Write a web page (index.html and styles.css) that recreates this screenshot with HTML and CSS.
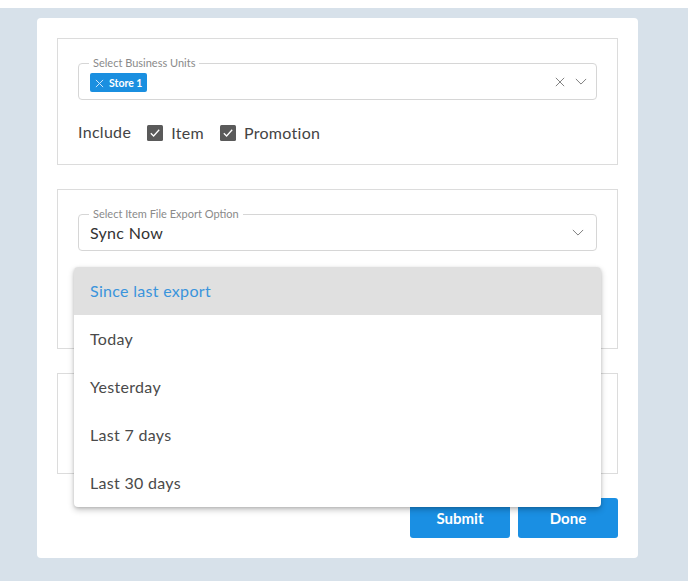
FILE: index.html
```html
<!DOCTYPE html>
<html>
<head>
<meta charset="utf-8">
<link rel="stylesheet" href="styles.css">
</head>
<body>
<div class="page">
  <div class="card">
    <div class="section s1">
      <div class="field">
        <span class="label">Select Business Units</span>
        <div class="field-body">
          <span class="chip">
            <svg class="chip-x" viewBox="0 0 10 10" width="9" height="9"><path d="M1 1L9 9M9 1L1 9" stroke="#cfe6fa" stroke-width="1.1" fill="none"/></svg>
            Store 1
          </span>
          <span class="spacer"></span>
          <svg class="icon" viewBox="0 0 12 12" width="10" height="10"><path d="M1 1L11 11M11 1L1 11" stroke="#777" stroke-width="1.1" fill="none"/></svg>
          <svg class="icon chev" viewBox="0 0 14 8" width="12" height="7"><path d="M1 1L7 7L13 1" stroke="#777" stroke-width="1.1" fill="none"/></svg>
        </div>
      </div>
      <div class="include">
        <span class="inc-label">Include</span>
        <span class="check"><svg viewBox="0 0 16 16" width="16" height="16"><rect width="16" height="16" rx="1.5" fill="#5a5a5a"/><path d="M3.8 8.3L6.6 11L12.2 4.8" stroke="#fff" stroke-width="1.3" fill="none"/></svg>Item</span>
        <span class="check"><svg viewBox="0 0 16 16" width="16" height="16"><rect width="16" height="16" rx="1.5" fill="#5a5a5a"/><path d="M3.8 8.3L6.6 11L12.2 4.8" stroke="#fff" stroke-width="1.3" fill="none"/></svg>Promotion</span>
      </div>
    </div>

    <div class="section s2">
      <div class="field">
        <span class="label">Select Item File Export Option</span>
        <div class="field-body">
          <span class="value">Sync Now</span>
          <span class="spacer"></span>
          <svg class="icon chev2" viewBox="0 0 14 8" width="12" height="7"><path d="M1 1L7 7L13 1" stroke="#777" stroke-width="1.1" fill="none"/></svg>
        </div>
        <ul class="menu">
          <li class="active">Since last export</li>
          <li>Today</li>
          <li>Yesterday</li>
          <li>Last 7 days</li>
          <li>Last 30 days</li>
        </ul>
      </div>
    </div>

    <div class="section s3"></div>

    <div class="actions">
      <button class="btn">Submit</button>
      <button class="btn">Done</button>
    </div>
  </div>
</div>
</body>
</html>
```

FILE: styles.css
```css
* { box-sizing: border-box; }
html, body { margin: 0; padding: 0; background: #fff; }
body { font-family: Lato, "Open Sans", sans-serif; color: #4a4a4a; }

.page {
  margin-top: 8px;
  background: #d7e1ea;
  height: 573px;
  padding: 10px 0 0 37px;
}
.card {
  width: 601px;
  height: 540px;
  background: #fff;
  border-radius: 4px;
  padding: 20px;
  display: flex;
  flex-direction: column;
  gap: 24px;
}
.section {
  border: 1px solid #dcdcdc;
  padding: 24px 20px 0 20px;
  position: relative;
  flex-shrink: 0;
}
.s1 { height: 127px; }
.s2 { height: 160px; }
.s3 { height: 101px; }

.field {
  position: relative;
  height: 37px;
  border: 1px solid #d6d6d6;
  border-radius: 4px;
}
.label {
  position: absolute;
  top: -8px;
  left: 10px;
  padding: 0 4px;
  background: #fff;
  font-size: 11px;
  line-height: 13px;
  color: #8a8a8a;
}
.field-body {
  height: 100%;
  display: flex;
  align-items: center;
  padding: 0 9px 0 11px;
}
.spacer { flex: 1; }
.chip {
  display: inline-flex;
  align-items: center;
  gap: 5px;
  height: 19px;
  margin-top: 2px;
  padding: 0 5px 0 5px;
  background: #1a8fe0;
  color: #fff;
  font-size: 10.5px;
  font-weight: 700;
  border-radius: 2px;
}
.chip-x { margin-top: 2px; }
.icon { display: block; }
.chev { margin-left: 10px; }
.chev2 { margin-right: 3px; }
.value { font-size: 16px; letter-spacing: 0.3px; color: #333; margin-top: -1px; }

.include {
  display: flex;
  align-items: center;
  margin-top: 23px;
  font-size: 16px;
  letter-spacing: 0.3px;
  color: #444;
}
.inc-label { margin-top: -3px; margin-right: 16px; }
.check {
  display: inline-flex;
  align-items: center;
  gap: 8px;
  margin-right: 16px;
}
.check svg { display: block; }

.menu {
  position: absolute;
  top: calc(100% + 17px);
  left: -5px;
  right: -5px;
  margin: 0;
  padding: 0;
  list-style: none;
  background: #fff;
  border-radius: 4px;
  box-shadow: 0 3px 6px rgba(0,0,0,0.22), 0 1px 3px rgba(0,0,0,0.14);
  overflow: hidden;
  z-index: 5;
}
.menu li {
  height: 48px;
  line-height: 48px;
  padding-left: 16px;
  font-size: 16px;
  letter-spacing: 0.3px;
  color: #4a4a4a;
}
.menu li.active {
  background: #e0e0e0;
  color: #3a94dc;
}

.actions {
  display: flex;
  justify-content: flex-end;
  gap: 8px;
  flex-shrink: 0;
}
.btn {
  width: 100px;
  height: 40px;
  border: none;
  border-radius: 3px;
  background: #1a8fe3;
  color: #fff;
  font-family: Lato, sans-serif;
  font-size: 15px;
  font-weight: 700;
}
```
